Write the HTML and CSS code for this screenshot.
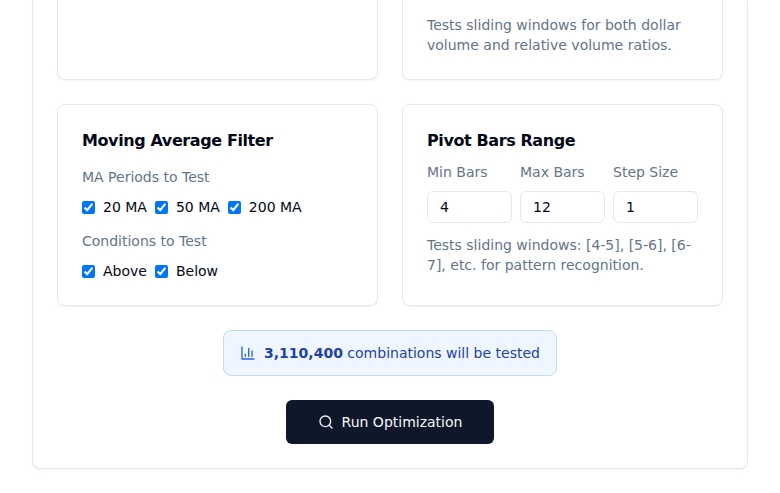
FILE: index.html
```html
<!DOCTYPE html>
<html lang="en">
<head>
<meta charset="utf-8">
<title>Optimization</title>
<link rel="stylesheet" href="styles.css">
</head>
<body>
<main class="panel">
  <div class="grid">
    <section class="card card-top"></section>
    <section class="card card-top">
      <p class="hint">Tests sliding windows for both dollar volume and relative volume ratios.</p>
    </section>
    <section class="card">
      <h3>Moving Average Filter</h3>
      <div class="group">
        <span class="label">MA Periods to Test</span>
        <div class="checks">
          <label><input type="checkbox" checked>20 MA</label>
          <label><input type="checkbox" checked>50 MA</label>
          <label><input type="checkbox" checked>200 MA</label>
        </div>
      </div>
      <div class="group">
        <span class="label">Conditions to Test</span>
        <div class="checks">
          <label><input type="checkbox" checked>Above</label>
          <label><input type="checkbox" checked>Below</label>
        </div>
      </div>
    </section>
    <section class="card">
      <h3>Pivot Bars Range</h3>
      <div class="fields">
        <label>Min Bars<input type="text" value="4"></label>
        <label>Max Bars<input type="text" value="12"></label>
        <label>Step Size<input type="text" value="1"></label>
      </div>
      <p class="hint">Tests sliding windows: [4-5], [5-6], [6-7], etc. for pattern recognition.</p>
    </section>
  </div>
  <div class="summary">
    <svg class="icon chart" viewBox="0 0 24 24"><path d="M3 3v18h18"/><path d="M18 17V9"/><path d="M13 17V5"/><path d="M8 17v-3"/></svg>
    <span><strong>3,110,400</strong> combinations will be tested</span>
  </div>
  <button class="run" type="button">
    <svg class="icon" viewBox="0 0 24 24"><circle cx="11" cy="11" r="8"/><path d="m21 21-4.3-4.3"/></svg>
    Run Optimization
  </button>
</main>
</body>
</html>
```

FILE: styles.css
```css
* { box-sizing: border-box; }
body {
  margin: 0;
  height: 493px;
  overflow: hidden;
  background: #fff;
  color: #020817;
  font: 14px/20px "DejaVu Sans", sans-serif;
}
.panel {
  display: flex;
  flex-direction: column;
  align-items: center;
  gap: 24px;
  width: 716px;
  height: 469px;
  margin: 0 32px;
  padding: 0 24px 24px;
  border: 1px solid #e2e8f0;
  border-top: 0;
  border-radius: 0 0 8px 8px;
  box-shadow: 0 1px 2px rgb(0 0 0 / 0.05);
}
.grid {
  display: grid;
  grid-template-columns: 321px 321px;
  grid-template-rows: 80px 202px;
  gap: 24px;
}
.card {
  padding: 24px;
  border: 1px solid #e2e8f0;
  border-radius: 8px;
  box-shadow: 0 1px 2px rgb(0 0 0 / 0.05);
}
.card-top {
  padding-top: 15px;
  border-top: 0;
  border-radius: 0 0 8px 8px;
}
h3 {
  margin: 0;
  font-size: 16px;
  line-height: 24px;
  font-weight: 600;
  letter-spacing: -0.4px;
}
.hint { margin: 0; color: #64748b; }
.label { display: block; color: #64748b; }
.group { margin-top: 14px; }
.checks { display: flex; gap: 8px; margin-top: 10px; }
.checks label { display: flex; align-items: center; gap: 8px; }
.checks input { width: 13px; height: 13px; margin: 0; }
.fields { display: flex; gap: 8px; margin: 9px 0 12px; }
.fields label { flex: 1; min-width: 0; color: #64748b; }
.fields input {
  display: block;
  width: 100%;
  height: 32px;
  margin-top: 9px;
  padding: 4px 12px;
  border: 1px solid #e2e8f0;
  border-radius: 6px;
  background: #fff;
  color: #020817;
  font: inherit;
}
.summary {
  display: flex;
  align-items: center;
  gap: 8px;
  height: 46px;
  padding: 0 16px;
  border: 1px solid #bfdbfe;
  border-radius: 8px;
  background: #eff6ff;
  color: #1e40af;
}
.icon {
  width: 16px;
  height: 16px;
  fill: none;
  stroke: currentColor;
  stroke-width: 2;
  stroke-linecap: round;
  stroke-linejoin: round;
}
.chart { color: #2563eb; }
.run {
  display: flex;
  align-items: center;
  justify-content: center;
  gap: 8px;
  height: 44px;
  padding: 0 32px;
  border: 0;
  border-radius: 6px;
  background: #0f172a;
  color: #f8fafc;
  font: inherit;
}
```
